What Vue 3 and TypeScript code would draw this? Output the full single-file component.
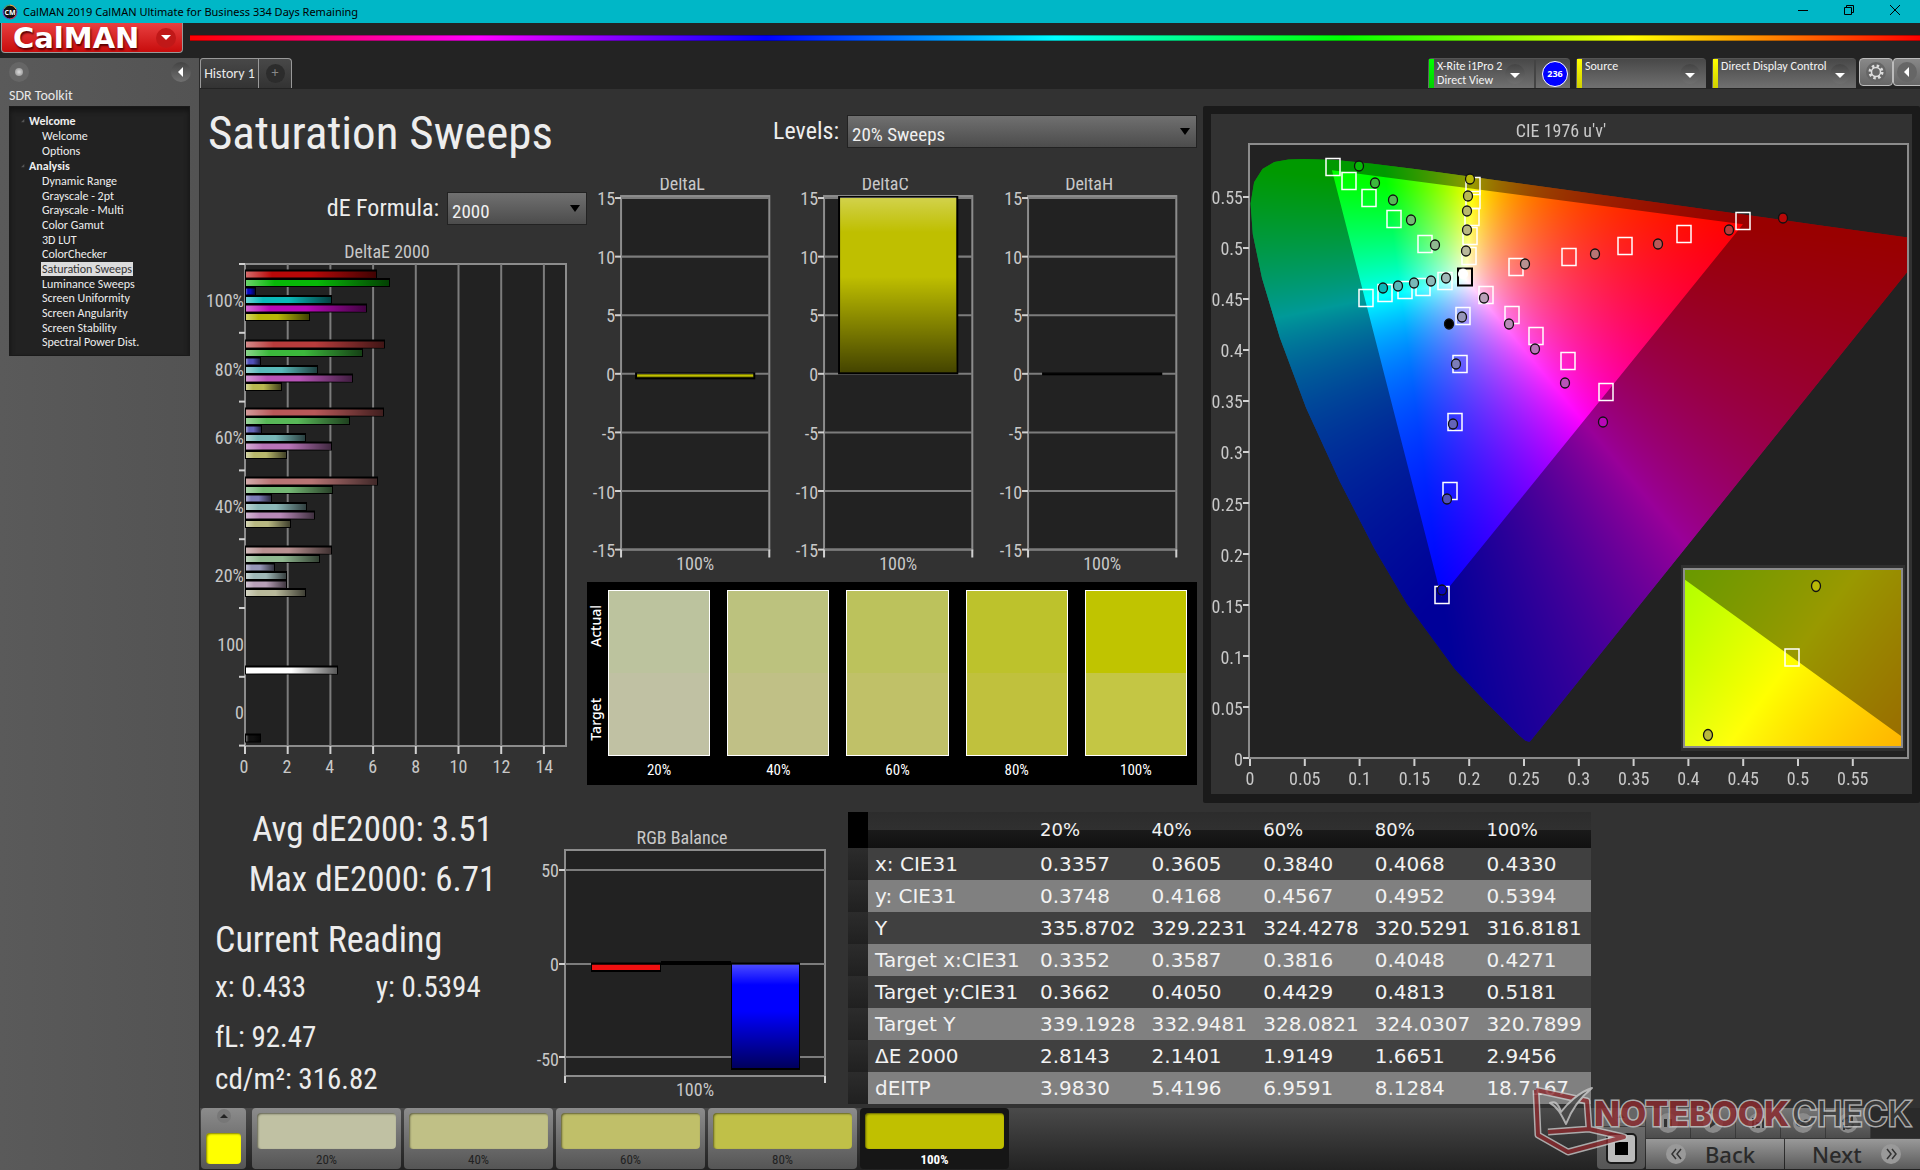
<script setup lang="ts">
import { onMounted, ref } from 'vue'

interface TreeItem { label: string; group?: boolean; active?: boolean }
const tree: TreeItem[] = [
  { label: 'Welcome', group: true },
  { label: 'Welcome' },
  { label: 'Options' },
  { label: 'Analysis', group: true },
  { label: 'Dynamic Range' },
  { label: 'Grayscale - 2pt' },
  { label: 'Grayscale - Multi' },
  { label: 'Color Gamut' },
  { label: '3D LUT' },
  { label: 'ColorChecker' },
  { label: 'Saturation Sweeps', active: true },
  { label: 'Luminance Sweeps' },
  { label: 'Screen Uniformity' },
  { label: 'Screen Angularity' },
  { label: 'Screen Stability' },
  { label: 'Spectral Power Dist.' },
]

/* DeltaE 2000 bars: one group for each saturation level, order R G B C M Y */
const hues: [number, number, number][] = [
  [1, 0, 0], [0, 1, 0], [0, 0, 1], [0, 1, 1], [1, 0, 1], [1, 1, 0],
]
/* value of the weak channels per hue, from 100% down to 20% */
const lows = [
  [8, 60, 88, 116, 144],
  [8, 60, 88, 116, 144],
  [8, 80, 100, 124, 150],
  [10, 88, 120, 140, 160],
  [8, 84, 116, 138, 160],
  [8, 80, 108, 130, 154],
]
function tone(hue: number, level: number): string {
  const lo = lows[hue][level]
  const c = hues[hue].map((v) => (v ? 184 : lo))
  return `rgb(${c.join(',')})`
}
const deGroups = [
  { y: 34, widths: [131, 144, 10, 86, 121, 64] },
  { y: 104, widths: [139, 117, 15, 72, 107, 36] },
  { y: 172, widths: [138, 104, 16, 60, 86, 41] },
  { y: 241, widths: [132, 87, 26, 61, 69, 45] },
  { y: 310, widths: [86, 74, 29, 41, 41, 60] },
]
const deBars = deGroups.flatMap((g, level) =>
  g.widths.map((w, i) => ({ y: g.y + i * 8.5 - 3, w, fill: tone(i, level) })),
)
deBars.push({ y: 427, w: 92, fill: '#ffffff' }, { y: 495, w: 15, fill: '#101010' })
const deLabels = ['100%', '80%', '60%', '40%', '20%', '100', '0']
const deTicks = [0, 1, 2, 3, 4, 5, 6, 7]

const deltaCharts = [
  { title: 'DeltaL', y: 195, h: 5, fill: '#bfbf00' },
  { title: 'DeltaC', y: 19, h: 176, fill: '#bfbf00' },
  { title: 'DeltaH', y: 195, h: 1, fill: '#000000' },
]
const deltaTicks = [15, 10, 5, 0, -5, -10, -15]

const swatches = [
  { label: '20%', actual: '#bcc39e', target: '#c0c1a3' },
  { label: '40%', actual: '#bcc27e', target: '#c0c086' },
  { label: '60%', actual: '#bcc25c', target: '#c0c168' },
  { label: '80%', actual: '#bdc22c', target: '#c0c13d' },
  { label: '100%', actual: '#c0c400', target: '#c4c644' },
]
const stepColors = ['#c0c1a3', '#c0c086', '#c0bf69', '#c0c048', '#c0c000']

const tableHead = ['20%', '40%', '60%', '80%', '100%']
const tableRows: [string, string[]][] = [
  ['x: CIE31', ['0.3357', '0.3605', '0.3840', '0.4068', '0.4330']],
  ['y: CIE31', ['0.3748', '0.4168', '0.4567', '0.4952', '0.5394']],
  ['Y', ['335.8702', '329.2231', '324.4278', '320.5291', '316.8181']],
  ['Target x:CIE31', ['0.3352', '0.3587', '0.3816', '0.4048', '0.4271']],
  ['Target y:CIE31', ['0.3662', '0.4050', '0.4429', '0.4813', '0.5181']],
  ['Target Y', ['339.1928', '332.9481', '328.0821', '324.0307', '320.7899']],
  ['ΔE 2000', ['2.8143', '2.1401', '1.9149', '1.6651', '2.9456']],
  ['dEITP', ['3.9830', '5.4196', '6.9591', '8.1284', '18.7167']],
]

/* CIE 1976 chart: plot area inside the 701 x 680 panel */
const plot = { left: 38, right: 697, top: 30, bottom: 644, sx: 1096, sy: 1021 }
const inset = { left: 473, top: 455, width: 218, height: 178, sx: 4122, sy: 3371, cx: 0.4271, cy: 0.5181 }
const axis = ['0', '0.05', '0.1', '0.15', '0.2', '0.25', '0.3', '0.35', '0.4', '0.45', '0.5', '0.55']

const targets: number[][] = [
  [122, 53], [138, 67], [158, 84], [183, 105], [214, 130],
  [262, 72], [262, 86], [261, 103], [259, 122], [258, 142],
  [305, 153], [358, 143], [414, 132], [473, 120], [532, 107],
  [155, 184], [174, 179], [194, 176], [212, 173], [234, 167],
  [275, 181], [301, 201], [325, 222], [357, 247], [395, 278],
  [252, 202], [249, 250], [244, 308], [239, 377], [231, 481],
]
/* measured points per hue, from 100% down to 20% */
const measured: { hue: number; at: number[][] }[] = [
  { hue: 0, at: [[572, 104], [518, 116], [447, 130], [384, 140], [314, 150]] },
  { hue: 1, at: [[148, 52], [164, 69], [182, 86], [200, 106], [224, 131]] },
  { hue: 2, at: [[231, 476], [236, 385], [242, 310], [245, 250], [251, 203]] },
  { hue: 3, at: [[172, 174], [187, 172], [203, 169], [220, 167], [235, 164]] },
  { hue: 4, at: [[392, 308], [354, 269], [324, 235], [298, 210], [273, 184]] },
  { hue: 5, at: [[259, 65], [257, 82], [256, 97], [256, 116], [255, 137]] },
]
const dots = measured.flatMap((m) => m.at.map((p, level) => ({ x: p[0], y: p[1], fill: tone(m.hue, level) })))

const locus: number[][] = [
  [0.1741, 0.005], [0.1733, 0.0048], [0.1714, 0.0051], [0.1689, 0.0069], [0.1644, 0.0109], [0.1566, 0.0177],
  [0.144, 0.0297], [0.1241, 0.0578], [0.1096, 0.0868], [0.0913, 0.1327], [0.0687, 0.2007], [0.0454, 0.295],
  [0.0235, 0.4127], [0.0082, 0.5384], [0.0039, 0.6548], [0.0139, 0.7502], [0.0389, 0.812], [0.0743, 0.8338],
  [0.1142, 0.8262], [0.1547, 0.8059], [0.2296, 0.7543], [0.3016, 0.6923], [0.3731, 0.6245], [0.4441, 0.5547],
  [0.5125, 0.4866], [0.5752, 0.4242], [0.627, 0.3725], [0.6658, 0.334], [0.6915, 0.3083], [0.719, 0.2809],
  [0.7347, 0.2653],
]
const gamut: number[][] = [[0.64, 0.33], [0.21, 0.71], [0.15, 0.06]]

function toPlot([x, y]: number[]): number[] {
  const d = -2 * x + 12 * y + 3
  return [plot.left + ((4 * x) / d) * plot.sx, plot.bottom - ((9 * y) / d) * plot.sy]
}
function toInset([x, y]: number[]): number[] {
  return [
    inset.left + inset.width / 2 + (x - inset.cx) * inset.sx,
    inset.top + inset.height / 2 - (y - inset.cy) * inset.sy,
  ]
}
function colorOf(x: number, y: number): number[] {
  const X = x / y
  const Z = (1 - x - y) / y
  const r = Math.max(0, 3.2406 * X - 1.5372 - 0.4986 * Z)
  const g = Math.max(0, -0.9689 * X + 1.8758 + 0.0415 * Z)
  const b = Math.max(0, 0.0557 * X - 0.204 + 1.057 * Z)
  const m = Math.max(r, g, b) || 1
  return [(r / m) * 255, (g / m) * 255, (b / m) * 255]
}
function shade(
  w: number, h: number, xyAt: (px: number, py: number) => number[],
): HTMLCanvasElement {
  const c = document.createElement('canvas')
  c.width = w
  c.height = h
  const ctx = c.getContext('2d')!
  const img = ctx.createImageData(w, h)
  for (let py = 0; py < h; py++) {
    for (let px = 0; px < w; px++) {
      const [x, y] = xyAt(px + 0.5, py + 0.5)
      const rgb = colorOf(x, Math.max(y, 0.0001))
      const i = (py * w + px) * 4
      img.data[i] = rgb[0]
      img.data[i + 1] = rgb[1]
      img.data[i + 2] = rgb[2]
      img.data[i + 3] = 255
    }
  }
  ctx.putImageData(img, 0, 0)
  return c
}
function trace(path: Path2D, pts: number[][]): Path2D {
  pts.forEach((p, i) => (i ? path.lineTo(p[0], p[1]) : path.moveTo(p[0], p[1])))
  path.closePath()
  return path
}

const canvas = ref<HTMLCanvasElement | null>(null)
onMounted(() => {
  const ctx = canvas.value?.getContext('2d')
  if (!ctx) return
  const w = plot.right - plot.left
  const h = plot.bottom - plot.top

  ctx.save()
  ctx.beginPath()
  ctx.rect(plot.left, plot.top, w, h)
  ctx.clip()
  ctx.clip(trace(new Path2D(), locus.map(toPlot)))
  ctx.drawImage(shade(w, h, (px, py) => {
    const u = px / plot.sx
    const v = (h - py) / plot.sy
    const d = 6 * u - 16 * v + 12
    return [(9 * u) / d, (4 * v) / d]
  }), plot.left, plot.top)
  const outside = new Path2D()
  outside.rect(0, 0, 701, 680)
  trace(outside, gamut.map(toPlot))
  ctx.fillStyle = 'rgba(0, 0, 0, 0.4)'
  ctx.fill(outside, 'evenodd')
  ctx.restore()

  ctx.fillStyle = '#303030'
  ctx.fillRect(inset.left - 3, inset.top - 4, inset.width + 6, inset.height + 8)
  ctx.save()
  ctx.beginPath()
  ctx.rect(inset.left, inset.top, inset.width, inset.height)
  ctx.clip()
  ctx.drawImage(shade(inset.width, inset.height, (px, py) => [
    inset.cx + (px - inset.width / 2) / inset.sx,
    inset.cy - (py - inset.height / 2) / inset.sy,
  ]), inset.left, inset.top)
  const outsideInset = new Path2D()
  outsideInset.rect(inset.left, inset.top, inset.width, inset.height)
  const triangle = trace(new Path2D(), gamut.map(toInset))
  ctx.clip(outsideInset)
  outsideInset.addPath(triangle)
  const frame = new Path2D()
  frame.rect(-5000, -5000, 10000, 10000)
  frame.addPath(triangle)
  ctx.fillStyle = 'rgba(0, 0, 0, 0.4)'
  ctx.fill(frame, 'evenodd')
  ctx.restore()
})

const formula = ref('2000')
const levels = ref('20% Sweeps')
const transport = ['stop', 'play', 'read', 'loop', 'refresh']
</script>

<template>
  <div class="app">
    <header class="titlebar">
      <svg class="app-icon" viewBox="0 0 16 16" aria-hidden="true">
        <circle cx="8" cy="8" r="7" fill="#111" stroke="#7a4bd0" />
        <path d="M2 5a7 7 0 0 1 6-4" fill="none" stroke="#3fc04a" />
        <path d="M8 1a7 7 0 0 1 6 4" fill="none" stroke="#e0c030" />
        <path d="M14 11a7 7 0 0 1-6 4" fill="none" stroke="#d03a3a" />
        <text x="8" y="11" text-anchor="middle" class="icon-text">CM</text>
      </svg>
      <span class="window-title">CalMAN 2019 CalMAN Ultimate for Business 334 Days Remaining</span>
      <div class="window-buttons">
        <button type="button" aria-label="Minimize"><svg viewBox="0 0 12 12"><path d="M1 6.5h10" /></svg></button>
        <button type="button" aria-label="Restore"><svg viewBox="0 0 12 12"><path d="M1.500 3.500h7v7h-7zM3.500 3.500v-2h7v7h-2" /></svg></button>
        <button type="button" aria-label="Close"><svg viewBox="0 0 12 12"><path d="M1 1l10 10M11 1L1 11" /></svg></button>
      </div>
    </header>

    <div class="brandbar">
      <button type="button" class="brand">
        <span>CalMAN</span>
        <i class="brand-drop"></i>
      </button>
      <div class="spectrum"></div>
    </div>

    <div class="body">
      <aside class="sidebar">
        <div class="side-tools">
          <span class="knob"><i></i></span>
          <button type="button" class="round collapse" aria-label="Collapse"><svg viewBox="0 0 20 20"><path d="M12 5v10L7 10z" fill="#fff" /></svg></button>
        </div>
        <h2 class="side-title">SDR Toolkit</h2>
        <ul class="tree">
          <li v-for="(t, i) in tree" :key="i" :class="{ group: t.group, active: t.active }">
            <svg v-if="t.group" class="caret" viewBox="0 0 6 6"><path d="M5 0v5H0z" fill="#555" /></svg>
            <a href="#">{{ t.label }}</a>
          </li>
        </ul>
      </aside>

      <main class="main">
        <div class="tabs">
          <div class="history">
            <button type="button" class="tab">History 1</button>
            <button type="button" class="tab plus" aria-label="Add tab"><span>+</span></button>
          </div>
          <div class="devices">
            <div class="device meter">
              <i class="strip green"></i>
              <span class="device-name">X-Rite i1Pro 2<br />Direct View</span>
              <button type="button" class="round" aria-label="Meter menu"><svg viewBox="0 0 20 20"><path d="M5 9h10l-5 5z" fill="#fff" /></svg></button>
              <i class="split"></i>
              <span class="count">236</span>
            </div>
            <div class="device source">
              <i class="strip"></i>
              <span class="device-name">Source</span>
              <button type="button" class="round" aria-label="Source menu"><svg viewBox="0 0 20 20"><path d="M5 9h10l-5 5z" fill="#fff" /></svg></button>
            </div>
            <div class="device display">
              <i class="strip"></i>
              <span class="device-name">Direct Display Control</span>
              <button type="button" class="round" aria-label="Display menu"><svg viewBox="0 0 20 20"><path d="M5 9h10l-5 5z" fill="#fff" /></svg></button>
            </div>
            <button type="button" class="tool" aria-label="Settings">
              <svg viewBox="0 0 20 20">
                <circle cx="10" cy="10" r="10" fill="#666" />
                <circle cx="10" cy="10" r="6" fill="none" stroke="#ddd" stroke-width="3" stroke-dasharray="2.400 2.300" />
                <circle cx="10" cy="10" r="4.500" fill="none" stroke="#ddd" stroke-width="1.500" />
              </svg>
            </button>
            <button type="button" class="tool last" aria-label="Collapse right">
              <svg viewBox="0 0 20 20"><circle cx="10" cy="10" r="10" fill="#666" /><path d="M12 5v10L7 10z" fill="#fff" /></svg>
            </button>
          </div>
        </div>

        <section class="page">
          <div class="upper">
            <div class="col-left">
              <h1>Saturation Sweeps</h1>
              <div class="field">
                <label for="formula">dE Formula:</label>
                <span class="select formula">
                  <select id="formula" v-model="formula"><option>2000</option></select>
                </span>
              </div>
              <svg class="chart de-chart" viewBox="0 0 387 550">
                <defs>
                  <linearGradient id="shadeX">
                    <stop offset="0" stop-color="#fff" stop-opacity="0.4" />
                    <stop offset="0.2" stop-color="#fff" stop-opacity="0" />
                    <stop offset="0.5" stop-color="#000" stop-opacity="0" />
                    <stop offset="1" stop-color="#000" stop-opacity="0.65" />
                  </linearGradient>
                </defs>
                <text x="187" y="18" text-anchor="middle">DeltaE 2000</text>
                <rect x="45" y="24" width="321" height="482" class="plot" />
                <path v-for="i in 7" :key="'g' + i" :d="`M${45 + i * 42.7} 24V506`" class="grid" />
                <path v-for="t in deTicks" :key="'t' + t" :d="`M39 ${24 + t * 68.8}h6`" class="tick" />
                <path v-for="t in deTicks" :key="'x' + t" :d="`M${45 + t * 42.7} 506v8`" class="tick" />
                <text v-for="(l, i) in deLabels" :key="'l' + i" x="44" :y="67 + i * 68.7" text-anchor="end">{{ l }}</text>
                <text v-for="t in deTicks" :key="'n' + t" :x="44 + t * 42.9" y="533" text-anchor="middle">{{ t * 2 }}</text>
                <g v-for="(b, i) in deBars" :key="'b' + i">
                  <rect x="45.500" :y="b.y - 0.5" :width="b.w" height="7.500" :fill="b.fill" stroke="#000" />
                  <rect x="46" :y="b.y" :width="b.w - 1" height="6.500" fill="url(#shadeX)" />
                  <path :d="`M45 ${b.y - 0.5}h${b.w + 1}`" stroke="#000" stroke-width="2" />
                </g>
              </svg>
            </div>

            <div class="col-mid">
              <div class="field">
                <label for="levels">Levels:</label>
                <span class="select levels">
                  <select id="levels" v-model="levels"><option>20% Sweeps</option></select>
                </span>
              </div>
              <div class="deltas">
                <svg v-for="c in deltaCharts" :key="c.title" class="chart" viewBox="0 0 203 398">
                  <defs>
                    <linearGradient id="shadeY" x2="0" y2="1">
                      <stop offset="0" stop-color="#fff" stop-opacity="0.3" />
                      <stop offset="0.2" stop-color="#fff" stop-opacity="0" />
                      <stop offset="0.45" stop-color="#000" stop-opacity="0" />
                      <stop offset="1" stop-color="#000" stop-opacity="0.65" />
                    </linearGradient>
                  </defs>
                  <text x="95" y="12" text-anchor="middle">{{ c.title }}</text>
                  <rect x="34" y="18" width="148" height="353" class="plot" />
                  <path d="M34 19h148" stroke="#8c8c8c" stroke-width="3" />
                  <g v-for="(t, i) in deltaTicks" :key="t">
                    <path :d="`M34 ${20 + i * 58.5}h148`" class="grid" />
                    <path :d="`M28 ${20 + i * 58.5}h6`" class="tick" />
                    <text x="28" :y="27 + i * 58.6" text-anchor="end">{{ t }}</text>
                  </g>
                  <path d="M34 371v8M182 371v8" class="tick" />
                  <text x="108" y="391" text-anchor="middle">100%</text>
                  <rect x="49" :y="c.y" width="118" :height="c.h" :fill="c.fill" stroke="#000" stroke-width="2" />
                  <rect x="50" :y="c.y" width="116" :height="c.h" fill="url(#shadeY)" />
                </svg>
              </div>
              <div class="compare">
                <div class="compare-side"><span>Actual</span><span>Target</span></div>
                <figure v-for="s in swatches" :key="s.label">
                  <div class="pair">
                    <i :style="{ background: s.actual }"></i>
                    <i :style="{ background: s.target }"></i>
                  </div>
                  <figcaption>{{ s.label }}</figcaption>
                </figure>
              </div>
            </div>

            <div class="cie">
              <div class="cie-panel">
                <svg class="chart" viewBox="0 0 701 680"><rect x="38" y="30" width="659" height="614" fill="#222" /></svg>
                <canvas ref="canvas" width="701" height="680"></canvas>
                <svg class="chart" viewBox="0 0 701 680">
                  <text x="350" y="23" text-anchor="middle">CIE 1976 u'v'</text>
                  <rect x="38" y="30" width="659" height="614" class="frame" />
                  <g v-for="(a, i) in axis" :key="a">
                    <path :d="`M${39 + i * 54.8} 645v7`" class="tick" />
                    <path :d="`M32 ${644 - i * 51}h6`" class="tick" />
                    <text :x="39 + i * 54.8" y="671" text-anchor="middle">{{ a }}</text>
                    <text x="32" :y="652 - i * 51.1" text-anchor="end">{{ a }}</text>
                  </g>
                  <rect v-for="(t, i) in targets" :key="'t' + i" :x="t[0] - 7" :y="t[1] - 8.5" width="14" height="17" class="target" />
                  <rect x="247" y="154.500" width="14" height="17" class="target white-point" />
                  <ellipse v-for="(d, i) in dots" :key="'d' + i" :cx="d.x" :cy="d.y" rx="4.500" ry="5" :fill="d.fill" class="dot" />
                  <ellipse cx="252" cy="160" rx="4.500" ry="5" fill="#fff" stroke="#fff" />
                  <ellipse cx="238" cy="210" rx="4.500" ry="5" fill="#000" class="dot" />
                  <rect x="473" y="455" width="218" height="178" class="frame" />
                  <rect x="574" y="535" width="14" height="17" class="target" />
                  <ellipse cx="605" cy="472" rx="4.500" ry="5.500" fill="#b8b808" class="dot" />
                  <ellipse cx="497" cy="621" rx="4.500" ry="5.500" fill="#b8b83c" class="dot" />
                </svg>
              </div>
            </div>
          </div>

          <div class="lower">
            <div class="readings">
              <p class="big center">Avg dE2000: 3.51</p>
              <p class="big center">Max dE2000: 6.71</p>
              <h2 class="big heading">Current Reading</h2>
              <p class="mid xy"><span>x: 0.433</span><span>y: 0.5394</span></p>
              <p class="mid gap">fL: 92.47</p>
              <p class="mid last-line">cd/m²: 316.82</p>
            </div>
            <svg class="chart rgb" viewBox="0 0 318 302">
              <text x="152" y="41" text-anchor="middle">RGB Balance</text>
              <rect x="35" y="47" width="260" height="226" class="plot" />
              <path d="M35 67h260M35 161h260M35 254h260" class="grid" />
              <path d="M29 67h6M29 161h6M29 254h6M35 273v7M295 273v7" class="tick" />
              <text x="29" y="74" text-anchor="end">50</text>
              <text x="29" y="168" text-anchor="end">0</text>
              <text x="29" y="263" text-anchor="end">-50</text>
              <text x="165" y="293" text-anchor="middle">100%</text>
              <rect x="61.500" y="161" width="69" height="7" fill="#f01010" stroke="#000" />
              <path d="M61 160.500h70M61 168h70" stroke="#000" stroke-width="2" />
              <rect x="131" y="158" width="70" height="4" fill="#000" />
              <rect x="201.500" y="161" width="68" height="105" fill="#0000ff" stroke="#000" />
              <rect x="202" y="161" width="67" height="105" fill="url(#shadeY)" />
              <path d="M201 160.500h69M201 266h69" stroke="#000" stroke-width="2" />
            </svg>
            <table class="data">
              <thead>
                <tr><td class="grip"></td><th></th><th v-for="h in tableHead" :key="h" scope="col">{{ h }}</th></tr>
              </thead>
              <tbody>
                <tr v-for="r in tableRows" :key="r[0]">
                  <td class="grip"></td>
                  <th scope="row">{{ r[0] }}</th>
                  <td v-for="(v, i) in r[1]" :key="i">{{ v }}</td>
                </tr>
              </tbody>
            </table>
          </div>
        </section>

        <footer class="footer">
          <button type="button" class="step current" aria-label="Current color">
            <svg viewBox="0 0 14 14"><circle cx="7" cy="7" r="7" fill="#777" /><path d="M3 9h8L7 5z" fill="#222" /></svg>
            <i></i>
          </button>
          <button
            v-for="(s, i) in swatches" :key="s.label" type="button"
            class="step" :class="{ on: i === 4 }"
          >
            <i :style="{ background: stepColors[i] }"></i>{{ s.label }}
          </button>
          <div class="transport">
            <div class="pattern">
              <button type="button" class="pattern-up" aria-label="Show pattern"><svg viewBox="0 0 14 14"><circle cx="7" cy="7" r="7" fill="#777" /><path d="M3 9h8L7 5z" fill="#333" /></svg></button>
              <button type="button" class="pattern-box" aria-label="Pattern window"><i></i></button>
            </div>
            <div class="controls">
              <div class="icons">
                <button v-for="t in transport" :key="t" type="button" :aria-label="t">
                  <svg viewBox="0 0 20 20">
                    <circle cx="10" cy="10" r="10" fill="#8a8a8a" />
                    <path v-if="t === 'stop'" d="M6 6h3v8H6zM11 6h3v8h-3z" fill="#333" />
                    <path v-else-if="t === 'play'" d="M7 5l7 5-7 5z" fill="#333" />
                    <path v-else-if="t === 'read'" d="M5 5v10M15 5v10M8 10h4M8 14h4" stroke="#333" stroke-width="2" fill="none" />
                    <path v-else-if="t === 'loop'" d="M10 10c-2-4-6-3-6 0s4 4 6 0 6-3 6 0-4 4-6 0z" stroke="#333" stroke-width="2" fill="none" />
                    <path v-else d="M5 9a5 5 0 0 1 9-2M15 11a5 5 0 0 1-9 2M14 3v4h-4M6 17v-4h4" stroke="#333" stroke-width="2" fill="none" />
                  </svg>
                </button>
                <span class="void"></span>
              </div>
              <div class="nav">
                <button type="button"><svg viewBox="0 0 20 20"><circle cx="10" cy="10" r="10" fill="#999" /><path d="M10 5l-4 5 4 5M15 5l-4 5 4 5" stroke="#333" stroke-width="1.500" fill="none" /></svg>Back</button>
                <button type="button">Next<svg viewBox="0 0 20 20"><circle cx="10" cy="10" r="10" fill="#999" /><path d="M6 5l4 5-4 5M11 5l4 5-4 5" stroke="#333" stroke-width="1.500" fill="none" /></svg></button>
              </div>
            </div>
          </div>
        </footer>
      </main>
    </div>

    <svg class="watermark" viewBox="0 0 420 110" aria-hidden="true">
      <g fill="none" stroke-linejoin="round">
        <path d="M36 30L87 41L89 69L48 72M89 69L124 77L68 92L38 75L36 30" stroke="#c8c8c8" stroke-width="7" />
        <path d="M36 30L87 41L89 69L48 72M89 69L124 77L68 92L38 75L36 30" stroke="#8c2a2e" stroke-width="4" />
        <path d="M50 43c5-2 8 0 11 9c6-8 18-20 31-24c-11 9-20 20-26 36c-4-8-8-17-16-21z" fill="#4a4a4a" stroke="#c8c8c8" stroke-width="2" />
      </g>
      <text x="94" y="66" class="mark-a">NOTEBOOK</text>
      <text x="292" y="66" class="mark-b">CHECK</text>
    </svg>
  </div>
</template>

<style>
body { margin: 0; background: #232323; }
</style>

<style scoped>
* { box-sizing: border-box; }
.app {
  --narrow: 'Roboto Condensed', Carlito, Roboto, sans-serif;
  --ui: Carlito, Calibri, Lato, sans-serif;
  position: relative;
  display: flex;
  flex-direction: column;
  min-height: 100vh;
  background: #232323;
  color: #e8e8e8;
  font-family: var(--ui);
  overflow: hidden;
}
button { margin: 0; padding: 0; border: 0; background: none; color: inherit; font: inherit; }
i { display: block; flex: none; }
p, h1, h2, ul, figure { margin: 0; padding: 0; font-weight: 400; }
ul { list-style: none; }

.titlebar { display: flex; align-items: center; height: 23px; background: #00b7c7; color: #000; padding-left: 2px; }
.app-icon { width: 16px; height: 16px; }
.icon-text { font: 700 7px 'Open Sans', sans-serif; fill: #fff; }
.window-title { flex: 1; margin-left: 5px; font: 11px/22px 'Noto Sans', 'Open Sans', sans-serif; }
.window-buttons { display: flex; margin-right: 2px; }
.window-buttons button { width: 46px; height: 23px; display: grid; place-items: center; }
.window-buttons svg { width: 12px; height: 12px; margin-top: -3px; fill: none; stroke: #000; }

.brandbar { display: flex; height: 35px; }
.brand {
  display: flex; align-items: center; justify-content: space-between;
  width: 182px; height: 30px; margin-left: 1px; padding: 0 6px 0 11px;
  background: linear-gradient(#e84040, #c80c0c);
  border: 1px solid #999; border-top: 0; border-radius: 0 0 4px 4px;
  color: #fff; font: 700 29px/28px 'DejaVu Sans', sans-serif;
  text-shadow: 1px 2px 2px #5a0000;
}
.brand-drop { width: 20px; height: 20px; border-radius: 50%; background: #c01818; display: grid; place-items: center; }
.brand-drop::after { content: ''; border: 5px solid transparent; border-top-color: #fff; border-bottom: 0; }
.spectrum {
  flex: 1; height: 6px; margin: 12px 0 0 7px;
  background: linear-gradient(90deg, #f00, #f0f, #00f, #0ff, #0f0, #ff0, #f00);
  box-shadow: inset 0 1px rgba(0, 0, 0, .3), inset 0 -1px rgba(0, 0, 0, .3);
}

.body { flex: 1; display: flex; }
.sidebar { width: 200px; flex: none; background: linear-gradient(90deg, #5a5a5a, #535353); border-right: 1px solid #2a2a2a; padding: 0 9px; }
.side-tools { display: flex; justify-content: space-between; align-items: center; height: 28px; margin-right: -1px; }
.knob { width: 20px; height: 20px; border-radius: 50%; background: #666; display: grid; place-items: center; }
.knob i { width: 8px; height: 8px; border-radius: 50%; background: radial-gradient(#ddd, #888); }
.round { width: 20px; height: 20px; border-radius: 50%; background: linear-gradient(#444, #707070); flex: none; }
.round svg { display: block; }
.side-title { font-size: 14px; line-height: 20px; }
.tree { height: 250px; background: #222; border: 1px solid #1a1a1a; box-shadow: inset 0 4px 5px #151515; padding: 6px 0 0 11px; font-size: 12px; }
.tree li { display: flex; align-items: center; height: 14px; margin-bottom: 1px; padding-left: 20px; line-height: 14px; }
.tree li:nth-child(3n) { margin-bottom: 0; }
.tree li.group { padding-left: 0; font-weight: 700; height: 15px; }
.tree a { color: #eee; text-decoration: none; padding: 0 1px; }
.tree li.active a { background: #dcdcdc; color: #333; }
.caret { width: 4px; height: 4px; margin-right: 3px; }

.main { flex: 1; min-width: 0; display: flex; flex-direction: column; }
.tabs { display: flex; justify-content: space-between; height: 31px; }
.history { display: flex; width: 92px; height: 30px; background: linear-gradient(#484848, #333); border: 1px solid #999; border-bottom: 0; border-radius: 3px 4px 0 0; font-size: 14px; }
.tab { flex: 1; }
.plus { flex: none; width: 33px; border-left: 1px solid #999; display: grid; place-items: center; color: #888; }
.plus span { width: 19px; height: 19px; border-radius: 50%; background: #2c2c2c; line-height: 18px; }
.devices { display: flex; align-items: flex-start; height: 30px; }
.device { display: flex; align-items: center; height: 30px; margin-right: 6px; background: linear-gradient(#484848, #707070); border-radius: 4px 4px 0 0; border-top: 1px solid #555; }
.strip { width: 5px; height: 29px; background: linear-gradient(#ff0, #d0d000); margin: 0 3px 0 1px; }
.strip.green { background: linear-gradient(#0f0, #00d000); }
.device-name { flex: 1; min-width: 0; align-self: flex-start; font-size: 12px; line-height: 14px; color: #f4f4f4; white-space: nowrap; }
.device .round { margin-right: 6px; }
.meter { width: 142px; }
.meter .round { margin-right: 9px; }
.source { width: 130px; }
.display { width: 144px; margin-right: 3px; }
.split { width: 2px; height: 28px; background: #444; }
.count { flex: none; display: grid; place-items: center; width: 26px; height: 26px; margin: 0 2px 0 6px; border: 1px solid #fff; border-radius: 50%; background: #00f; color: #fff; font: 700 9px 'Open Sans', sans-serif; }
.tool { width: 34px; height: 28px; display: grid; place-items: center; border: 1px solid #bbb; border-radius: 4px; background: linear-gradient(#888, #666); }
.tool svg { width: 20px; height: 20px; }
.tool.last { width: 27px; border-right: 0; border-radius: 4px 0 0 4px; }

.page { flex: 1; background: #323232; }
.upper { display: grid; grid-template-columns: minmax(0, 387fr) minmax(0, 616fr) minmax(0, 717fr); }
.chart { display: block; width: 100%; }
.chart text { font: 18px var(--narrow); fill: #c8c8c8; }
.plot { fill: #222; stroke: #8c8c8c; stroke-width: 2; }
.frame { fill: none; stroke: #8c8c8c; stroke-width: 2; }
.grid { stroke: #7c7c7c; stroke-width: 2; }
.tick { stroke: #d0d0d0; stroke-width: 2; }

h1 { margin: 16px 0 0 8px; font: 47px/56px var(--narrow); color: #ededed; white-space: nowrap; }
.field { display: flex; justify-content: flex-end; align-items: center; gap: 8px; height: 34px; }
.field label { font: 24px/34px var(--narrow); color: #ededed; white-space: nowrap; }
.select { position: relative; display: block; height: 33px; }
.select::after { content: ''; position: absolute; right: 7px; top: 13px; border: 5px solid transparent; border-top: 7px solid #000; border-bottom: 0; pointer-events: none; }
.select select { appearance: none; width: 100%; height: 33px; padding: 6px 4px 0; border: 1px solid #222; border-radius: 0; background: linear-gradient(#707070, #4c4c4c); color: #f0f0f0; font: 19px var(--narrow); }
.formula { width: 140px; }
.levels { width: 350px; }
.col-left .field { margin-top: 30px; }
.de-chart { margin-top: 15px; }
.col-mid { padding: 25px 6px 0 0; }
.deltas { display: grid; grid-template-columns: repeat(3, 1fr); margin-top: 30px; }

.compare { display: flex; height: 203px; margin-top: 5px; padding: 8px 10px 0 0; background: #000; color: #fff; }
.compare-side { display: flex; flex-direction: column; justify-content: space-between; align-items: flex-start; width: 21px; height: 166px; padding: 15px 0; font: 500 14px/17px 'Noto Sans', sans-serif; }
.compare-side span { writing-mode: vertical-rl; transform: rotate(180deg); }
.compare figure { flex: 1; margin-right: 17px; }
.compare figure:last-child { margin-right: 0; }
.pair { height: 166px; border: 1px solid #fff; }
.pair i { height: 82px; }
.compare figcaption { margin-top: 5px; font: 15px/18px var(--narrow); text-align: center; }

.cie { align-self: start; margin-top: 17px; padding: 8px 8px 9px; background: #1a1a1a; border-radius: 2px; }
.cie-panel { display: grid; background: #323232; }
.cie-panel > * { grid-area: 1 / 1; width: 100%; }
.target { fill: none; stroke: #fff; stroke-width: 1.5; }
.white-point { stroke: #000; stroke-width: 2; }
.dot { stroke: #111; stroke-width: 1.3; }

.lower { display: grid; grid-template-columns: minmax(0, 330fr) minmax(0, 318fr) minmax(0, 743fr) minmax(0, 329fr); align-items: start; }
.readings { padding: 2px 0 0 15px; color: #ececec; font-family: var(--narrow); }
.big { font: 35px/50px var(--narrow); white-space: nowrap; }
.center { text-align: center; }
.heading { margin-top: 10px; font-size: 36px; }
.mid { font-size: 29px; line-height: 40px; white-space: nowrap; }
.gap { margin-top: 10px; }
.last-line { margin-top: 2px; }
.xy { display: flex; margin-top: 2px; }
.xy span { flex: none; width: 161px; }

.data { width: 100%; margin-top: 9px; border-collapse: collapse; table-layout: fixed; color: #f2f2f2; font: 20px/32px 'DejaVu Sans', sans-serif; }
.data th, .data td { height: 32px; padding: 0 0 0 7px; font-weight: 400; text-align: left; white-space: nowrap; }
.data thead th { height: 36px; font-size: 18px; background: linear-gradient(#2c2c2c, #303030 50%, #1a1a1a 50%, #111); }
.data thead th:nth-child(2) { width: 165px; }
.data .grip { width: 20px; padding: 0; background: linear-gradient(#2c2c2c, #202020); }
.data thead .grip { background: #000; }
.data tbody tr { background: #404040; }
.data tbody tr:nth-child(even) { background: #808080; }

.footer { display: flex; height: 62px; background: linear-gradient(#4a4a4a, #222); gap: 3px; padding-left: 1px; }
.step {
  display: flex; flex-direction: column; align-items: center; width: 149px; height: 61px; padding: 5px 5px 0;
  background: linear-gradient(#8c8c8c, #555); border-radius: 4px; color: #222; font: 13px/18px var(--narrow);
}
.step i { width: 100%; height: 36px; border-radius: 4px; box-shadow: inset 1px 1px 2px rgba(0, 0, 0, .5); margin-bottom: 2px; }
.step.on { background: #161616; color: #fff; font-weight: 700; }
.step.current { width: 45px; margin-right: 3px; padding-top: 1px; }
.step.current svg { width: 14px; height: 14px; }
.step.current i { width: 35px; height: 31px; margin-top: 10px; background: #ff0; }
.transport { display: flex; margin-left: auto; }
.pattern { width: 48px; margin-right: 1px; }
.pattern-up { display: block; width: 48px; height: 18px; background: #666; border-radius: 4px 4px 0 0; }
.pattern-up svg { width: 14px; height: 14px; }
.pattern-box { display: grid; place-items: center; width: 48px; height: 42px; margin-top: 1px; background: linear-gradient(#6a6a6a, #555); border-radius: 0 0 4px 4px; }
.pattern-box i { width: 31px; height: 31px; border: 2px solid #1a1a1a; border-radius: 5px; background: linear-gradient(#000, #000) center / 13px 13px no-repeat #bbb; }
.controls { width: 274px; }
.icons { display: flex; gap: 1px; height: 30px; }
.icons button { width: 44px; background: linear-gradient(#777, #4c4c4c); display: grid; place-items: center; }
.icons svg { width: 20px; height: 20px; }
.void { flex: 1; background: #2a2a2a; }
.nav { display: flex; gap: 1px; margin-top: 1px; }
.nav button { flex: 1; display: flex; align-items: center; justify-content: space-between; height: 30px; background: linear-gradient(#999, #5a5a5a); color: #2a2a2a; font: 500 22px/30px 'Noto Sans', sans-serif; padding: 0 29px 0 20px; }
.nav button:last-child { padding: 0 19px 0 27px; }
.nav svg { width: 20px; height: 20px; }

.watermark { position: absolute; right: 0; bottom: 0; width: 420px; height: 110px; opacity: .8; pointer-events: none; }
.mark-a, .mark-b { font: 800 34px Inter, sans-serif; fill: #8c2a2e; stroke: #c8c8c8; stroke-width: 3px; paint-order: stroke; }
.mark-b { font-weight: 500; fill: #3a3a3a; }
</style>
